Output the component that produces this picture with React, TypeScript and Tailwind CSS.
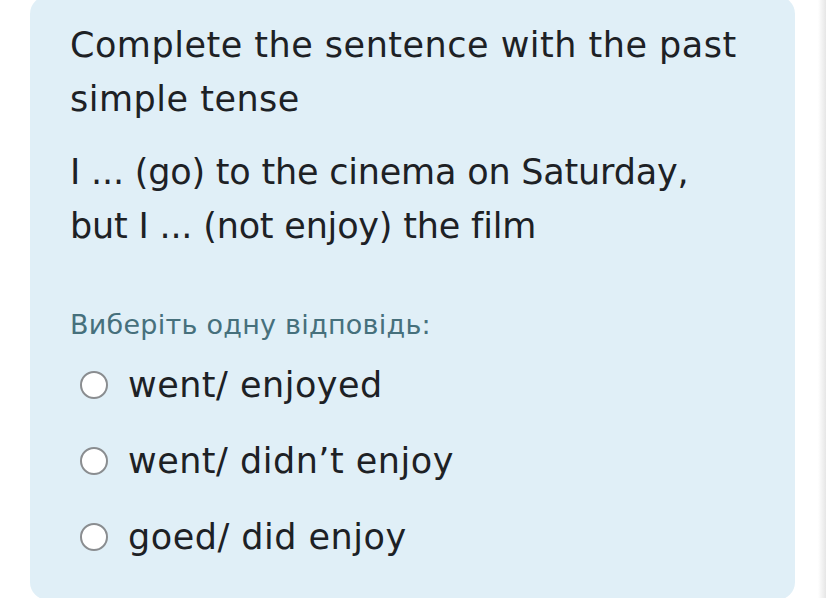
export default function App() {
  const options = ['went/ enjoyed', 'went/ didn’t enjoy', 'goed/ did enjoy'];

  return (
    <div className="relative w-[826px] h-[598px] overflow-hidden bg-white flex" style={{ fontFamily: '"DejaVu Sans", "Open Sans", sans-serif' }}>
      <div className="ml-[30px] mt-[-4px] w-[765px] h-[604px] rounded-[18px] bg-[#e0eff7] pt-[22px] pl-[40px] pr-[20px] text-[#1d2125]">
        <p className="text-[35px] leading-[54px] tracking-[0.5px] whitespace-nowrap">Complete the sentence with the past<br />simple tense</p>
        <p className="mt-[19px] text-[35px] leading-[54px] tracking-[-0.2px] whitespace-nowrap">I ... (go) to the cinema on Saturday,<br />but I ... (not enjoy) the film</p>
        <p className="mt-[52px] text-[27px] leading-[40px] tracking-[0.25px] text-[#46707c]">Виберіть одну відповідь:</p>
        <div className="mt-[13px] flex flex-col gap-[22px]">
          {options.map((o) => (
            <label key={o} className="flex items-center h-[54px] pl-[10px]">
              <span className="w-[28px] h-[28px] rounded-full border-[2.5px] border-[#8a8d90] bg-white shrink-0" />
              <span className="ml-[20px] text-[35px] leading-[54px] tracking-[0.5px]">{o}</span>
            </label>
          ))}
        </div>
      </div>
      <div className="absolute right-0 top-0 h-full w-[8px] bg-gradient-to-r from-white to-[#e6e6e6]" />
    </div>
  );
}
